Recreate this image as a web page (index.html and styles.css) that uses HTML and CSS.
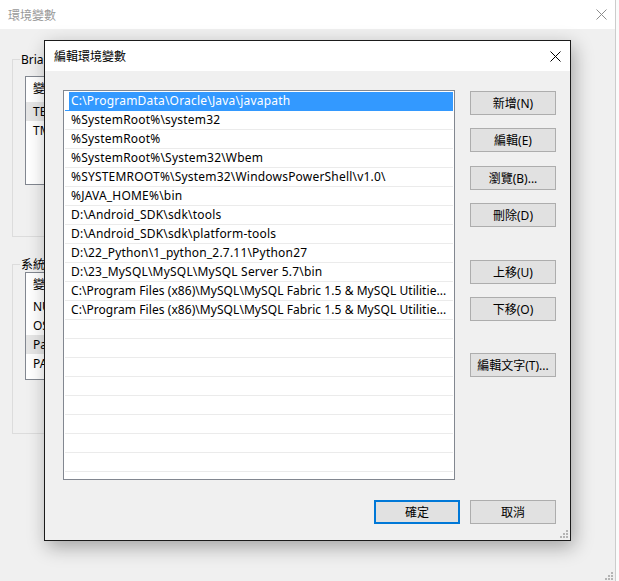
FILE: index.html
```html
<!DOCTYPE html>
<html lang="zh-Hant">
<head>
<meta charset="utf-8">
<title>編輯環境變數</title>
<link rel="stylesheet" href="styles.css">
</head>
<body>
<div class="bgwin">
  <div class="bg-title">
    <span class="bg-title-text">環境變數</span>
    <svg class="close-x" width="11" height="11" viewBox="0 0 11 11"><path d="M0.5 0.5 L10.5 10.5 M10.5 0.5 L0.5 10.5" stroke="#8c8c8c" stroke-width="1" fill="none"/></svg>
  </div>
  <div class="bg-body">
    <div class="group g1">
      <div class="group-label">Brian 的使用者變數(U)</div>
      <div class="lv lv1">
        <div class="lv-head h1">變數</div>
        <div class="lv-row sel">TEMP</div>
        <div class="lv-row">TMP</div>
      </div>
    </div>
    <div class="group g2">
      <div class="group-label">系統變數(S)</div>
      <div class="lv lv2">
        <div class="lv-head">變數</div>
        <div class="lv-row">NUMBER_OF_PROCESSORS</div>
        <div class="lv-row">OS</div>
        <div class="lv-row sel">Path</div>
        <div class="lv-row">PATHEXT</div>
      </div>
    </div>
  </div>
  <svg class="grip bg-grip" width="8" height="8" viewBox="0 0 8 8"><g fill="#b4b4b4"><rect x="6" y="0" width="2" height="2"/><rect x="3" y="3" width="2" height="2"/><rect x="6" y="3" width="2" height="2"/><rect x="0" y="6" width="2" height="2"/><rect x="3" y="6" width="2" height="2"/><rect x="6" y="6" width="2" height="2"/></g></svg>
</div>

<div class="dialog">
  <div class="dlg-title">
    <span>編輯環境變數</span>
    <svg class="close-x" width="11" height="11" viewBox="0 0 11 11"><path d="M0.5 0.5 L10.5 10.5 M10.5 0.5 L0.5 10.5" stroke="#000" stroke-width="1" fill="none"/></svg>
  </div>
  <div class="dlg-body">
    <div class="dlg-main">
      <div class="pathlist">
        <div class="item sel">C:\ProgramData\Oracle\Java\javapath</div>
        <div class="item">%SystemRoot%\system32</div>
        <div class="item">%SystemRoot%</div>
        <div class="item">%SystemRoot%\System32\Wbem</div>
        <div class="item">%SYSTEMROOT%\System32\WindowsPowerShell\v1.0\</div>
        <div class="item">%JAVA_HOME%\bin</div>
        <div class="item">D:\Android_SDK\sdk\tools</div>
        <div class="item">D:\Android_SDK\sdk\platform-tools</div>
        <div class="item">D:\22_Python\1_python_2.7.11\Python27</div>
        <div class="item">D:\23_MySQL\MySQL\MySQL Server 5.7\bin</div>
        <div class="item trunc">C:\Program Files (x86)\MySQL\MySQL Fabric 1.5 &amp; MySQL Utilitie...</div>
        <div class="item trunc">C:\Program Files (x86)\MySQL\MySQL Fabric 1.5 &amp; MySQL Utilitie...</div>
        <div class="item"></div>
        <div class="item"></div>
        <div class="item"></div>
        <div class="item"></div>
        <div class="item"></div>
        <div class="item"></div>
        <div class="item"></div>
        <div class="item"></div>
      </div>
      <div class="btncol">
        <div class="btn b-new">新增(N)</div>
        <div class="btn b-edit">編輯(E)</div>
        <div class="btn b-browse">瀏覽(B)...</div>
        <div class="btn b-del">刪除(D)</div>
        <div class="btn b-up">上移(U)</div>
        <div class="btn b-down">下移(O)</div>
        <div class="btn b-text">編輯文字(T)...</div>
      </div>
    </div>
    <div class="dlg-foot">
      <div class="btn ok">確定</div>
      <div class="btn">取消</div>
    </div>
  </div>
  <svg class="grip dlg-grip" width="8" height="8" viewBox="0 0 8 8"><g fill="#b4b4b4"><rect x="6" y="0" width="2" height="2"/><rect x="3" y="3" width="2" height="2"/><rect x="6" y="3" width="2" height="2"/><rect x="0" y="6" width="2" height="2"/><rect x="3" y="6" width="2" height="2"/><rect x="6" y="6" width="2" height="2"/></g></svg>
</div>
</body>
</html>
```

FILE: styles.css
```css
html, body {
  margin: 0;
  padding: 0;
  background: #fbfbfb;
  font-family: "Noto Sans", "Noto Sans CJK TC", sans-serif;
  font-size: 12px;
  color: #000;
}

.bgwin {
  position: relative;
  width: 615px;
  height: 581px;
  background: #f0f0f0;
  border-right: 1px solid #cccccc;
  overflow: hidden;
}

.bg-title {
  height: 29px;
  background: #fff;
  display: flex;
  align-items: center;
  justify-content: space-between;
  padding: 0 8px 0 8px;
  color: #999;
}

.close-x { display: block; }

.bg-body {
  padding: 30px 0 0 12px;
}

.group {
  box-sizing: border-box;
  width: 548px;
  border: 1px solid #dcdcdc;
}
.g1 { height: 178px; }
.g2 { height: 170px; margin-top: 27px; }

.group-label {
  width: fit-content;
  margin: -8px 0 0 7px;
  padding: 0 1px;
  line-height: 16px;
  background: #f0f0f0;
  white-space: nowrap;
}

.lv {
  box-sizing: border-box;
  width: 530px;
  margin-left: 12px;
  border: 1px solid #828790;
  background: #fff;
}
.lv1 { height: 109px; margin-top: 8px; }
.lv2 { height: 108px; margin-top: -1px; }

.lv-head {
  height: 24px;
  line-height: 24px;
  padding-left: 7px;
}
.lv-head.h1 { height: 25px; }

.lv-row {
  height: 19px;
  line-height: 19px;
  padding-left: 7px;
}
.lv-row.sel { background: #e6e6e6; }

.grip {
  position: absolute;
  display: block;
}
.bg-grip { right: 2px; bottom: 1px; }

/* dialog */
.dialog {
  position: absolute;
  left: 44px;
  top: 40px;
  box-sizing: border-box;
  width: 527px;
  height: 501px;
  border: 1px solid #1b1b1b;
  background: #f0f0f0;
  box-shadow: 3px 6px 18px rgba(0, 0, 0, 0.32);
}

.dlg-title {
  height: 30px;
  background: #fff;
  display: flex;
  align-items: center;
  justify-content: space-between;
  padding: 0 9px 0 9px;
}

.dlg-body {
  padding: 19px 14px 16px 18px;
}

.dlg-main {
  display: flex;
  align-items: flex-start;
}

.pathlist {
  box-sizing: border-box;
  width: 392px;
  height: 390px;
  border: 1px solid #828790;
  background: #fff;
  padding: 1px 1px 0 1px;
  overflow: hidden;
}

.item {
  box-sizing: border-box;
  height: 19px;
  line-height: 18px;
  border-bottom: 1px solid #ebebeb;
  padding: 0 2px 0 6px;
  white-space: nowrap;
  overflow: hidden;
  letter-spacing: 0.2px;
}
.item.trunc { letter-spacing: 0.06px; }
.item.sel {
  background: linear-gradient(to right, transparent 4px, #3399ff 4px);
  color: #fff;
  border-bottom-color: #3399ff;
}

.btncol {
  display: flex;
  flex-direction: column;
  width: 86px;
  margin-left: 15px;
}

.btn {
  box-sizing: border-box;
  width: 86px;
  height: 24px;
  border: 1px solid #adadad;
  background: #e1e1e1;
  display: flex;
  align-items: center;
  justify-content: center;
  white-space: nowrap;
}
.b-new { margin-top: 1px; }
.b-edit { margin-top: 13px; }
.b-browse { margin-top: 14px; }
.b-del { margin-top: 13px; }
.b-up { margin-top: 33px; }
.b-down { margin-top: 13px; }
.b-text { margin-top: 32px; }

.dlg-foot {
  display: flex;
  justify-content: flex-end;
  gap: 10px;
  margin-top: 20px;
}
.btn.ok {
  border: 2px solid #0078d7;
}

.dlg-grip { right: 2px; bottom: 2px; }
```
